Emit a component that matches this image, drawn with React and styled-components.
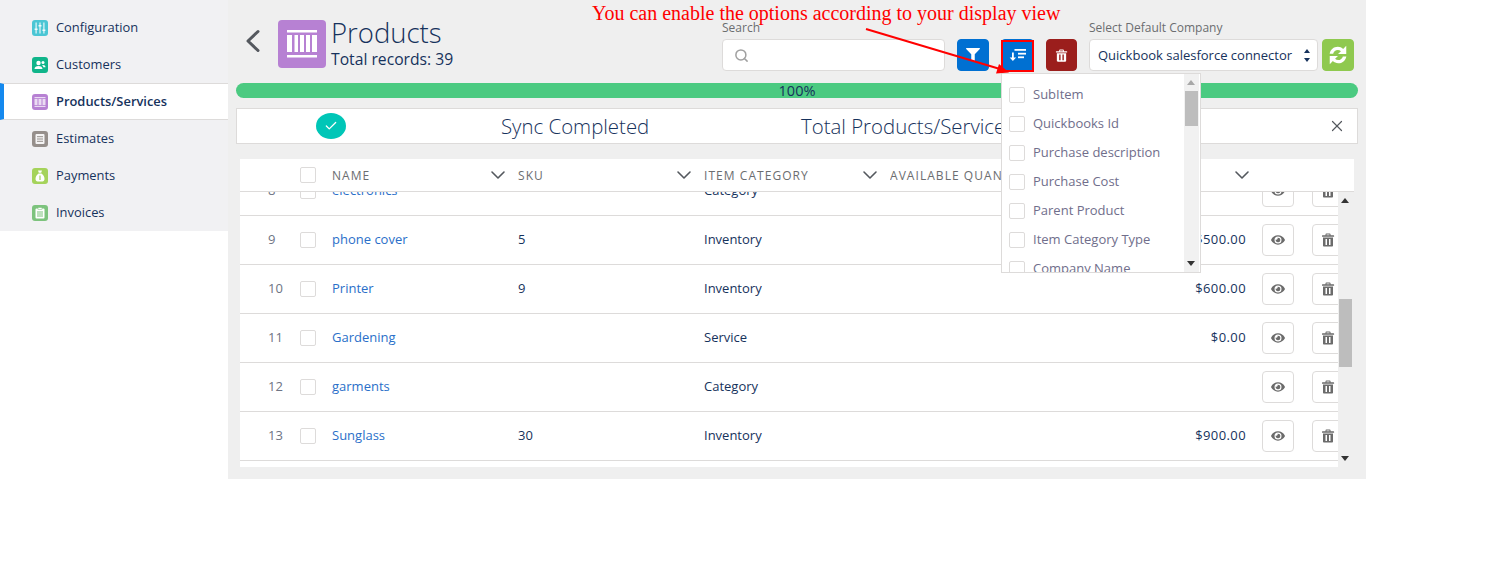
import React from "react";
import styled, { createGlobalStyle } from "styled-components";
import { ChevronDown, Search as SearchGlyph, X, Check } from "lucide-react";
import { FaEye, FaFilter } from "react-icons/fa";

const Global = createGlobalStyle`
  html, body { margin: 0; padding: 0; background: #fff; }
  body { font-family: "Open Sans", "Noto Sans", sans-serif; color: #16325c; font-size: 13px; }
  * { box-sizing: border-box; }
`;

const Page = styled.div`
  position: relative;
  width: 1497px;
  height: 583px;
  overflow: hidden;
  display: flex;
  align-items: flex-start;
`;
const Sidebar = styled.nav`
  width: 228px;
  height: 231px;
  padding-top: 9px;
  background: #f1f1f3;
  display: flex;
  flex-direction: column;
`;
const NavItem = styled.div`
  height: 37px;
  display: flex;
  align-items: center;
  gap: 8px;
  padding-left: ${p => (p.$active ? "28px" : "32px")};
  background: ${p => (p.$active ? "#fff" : "transparent")};
  border-left: ${p => (p.$active ? "4px solid #1589ee" : "0")};
  border-top: ${p => (p.$active ? "1px solid #dddbda" : "0")};
  border-bottom: ${p => (p.$active ? "1px solid #dddbda" : "0")};
  font-weight: ${p => (p.$active ? 600 : 400)};
  font-size: 12.9px;
  color: #16325c;
`;
const NavLabel = styled.span`
  padding-bottom: 2px;
`;
const NavIcon = styled.span`
  width: 16px;
  height: 16px;
  border-radius: 3px;
  background: ${p => p.$color};
  display: flex;
  align-items: center;
  justify-content: center;
  flex: none;
  svg { display: block; }
`;
const Main = styled.main`
  width: 1138px;
  height: 479px;
  background: #efefef;
  padding: 0 8px;
  display: flex;
  flex-direction: column;
`;
const Header = styled.header`
  height: 83px;
  display: flex;
  align-items: flex-start;
`;
const BackButton = styled.span`
  margin: 29px 0 0 9px;
  width: 25px;
  svg { display: block; }
`;
const ProductsBadge = styled.span`
  margin: 20px 5px 0 8px;
  width: 48px;
  height: 48px;
  border-radius: 4px;
  background: #b781d3;
  display: flex;
  align-items: center;
  justify-content: center;
`;
const TitleBlock = styled.div`
  padding-top: 15px;
  width: 391px;
`;
const Title = styled.h1`
  margin: 0;
  font-weight: 300;
  font-size: 27.5px;
  line-height: 35px;
  color: #16325c;
`;
const Count = styled.div`
  font-size: 15.7px;
  line-height: 18px;
  color: #16325c;
`;
const Field = styled.div`
  display: flex;
  flex-direction: column;
  width: ${p => p.$w}px;
  padding-top: 21px;
`;
const FieldLabel = styled.label`
  height: 18px;
  font-size: 12px;
  line-height: 14px;
  color: #6b6d70;
`;
const InputBox = styled.div`
  height: 32px;
  background: #fff;
  border: 1px solid #dddbda;
  border-radius: 4px;
  display: flex;
  align-items: center;
  padding-left: 11px;
  color: #a0a0a0;
  font-size: 13px;
`;
const SelectBox = styled(InputBox)`
  padding: 0 8px;
  justify-content: space-between;
  color: #16325c;
  white-space: nowrap;
`;
const Stepper = styled.span`
  display: flex;
  flex-direction: column;
  gap: 5px;
  margin-right: -1px;
`;
const StepArrow = styled.i`
  display: block;
  width: 0;
  height: 0;
  border-left: 3px solid transparent;
  border-right: 3px solid transparent;
  ${p => (p.$up ? "border-bottom: 4px solid #16325c;" : "border-top: 4px solid #16325c;")}
`;
const Actions = styled.div`
  display: flex;
  gap: 12px;
  margin: 39px 12px 0 12px;
`;
const IconButton = styled.button`
  width: ${p => p.$w || 32}px;
  height: 32px;
  padding: 0;
  border: 1px solid ${p => p.$bg};
  border-radius: 4px;
  background: ${p => p.$bg};
  display: flex;
  align-items: center;
  justify-content: center;
  color: #fff;
  svg { display: block; }
`;
const SyncButton = styled(IconButton)`
  margin: 39px 4px 0 4px;
`;
const Progress = styled.div`
  height: 15px;
  border-radius: 8px;
  background: #4bca81;
  text-align: center;
  font-size: 14.5px;
  line-height: 15px;
  color: #16325c;
`;
const SyncPanel = styled.section`
  height: 36px;
  margin-top: 10px;
  background: #fff;
  border: 1px solid #dddbda;
  display: flex;
  align-items: center;
  font-weight: 300;
  font-size: 20.4px;
  color: #16325c;
`;
const SyncBadge = styled.span`
  width: 30px;
  height: 26px;
  margin-left: 79px;
  border-radius: 50%;
  background: #00c6b7;
  color: #fff;
  display: flex;
  align-items: center;
  justify-content: center;
`;
const SyncStatus = styled.span`
  margin-left: 155px;
  width: 300px;
`;
const SyncTotal = styled.span`
  white-space: nowrap;
`;
const CloseIcon = styled.span`
  margin-left: auto;
  margin-right: 11px;
  color: #54585e;
  svg { display: block; }
`;
const TableCard = styled.section`
  margin: 15px 4px 0 4px;
  height: 308px;
  display: flex;
  flex-direction: column;
  overflow: hidden;
`;
const HeadRow = styled.div`
  flex: none;
  height: 33px;
  background: #fff;
  border-bottom: 1px solid #dddbda;
  display: grid;
  grid-template-columns: 60px 32px 186px 186px 186px 186px 186px;
  align-items: center;
`;
const HeadCell = styled.div`
  display: flex;
  align-items: center;
  padding-right: 8px;
  font-size: 12px;
  letter-spacing: 1.05px;
  color: #6b6d70;
  white-space: nowrap;
  overflow: hidden;
  svg { flex: none; margin-left: auto; color: #54585e; }
`;
const BodyWrap = styled.div`
  flex: 1;
  display: flex;
  min-height: 0;
  overflow: hidden;
`;
const Rows = styled.div`
  width: 1098px;
  background: #fff;
  overflow: hidden;
`;
const RowsInner = styled.div`
  margin-top: -25px;
`;
const Row = styled.div`
  height: 49px;
  border-bottom: 1px solid #dddbda;
  display: grid;
  grid-template-columns: 60px 32px 186px 186px 186px 356px 16px 32px 18px 32px;
  align-items: center;
  width: 1110px;
`;
const RowNum = styled.div`
  padding: 0 0 2px 28px;
  color: #6e7484;
`;
const CheckBox = styled.span`
  display: block;
  width: 16px;
  height: 16px;
  background: #fff;
  border: 1px solid #dddbda;
  border-radius: 2px;
  flex: none;
`;
const NameLink = styled.a`
  color: #2a6fc9;
  padding-bottom: 2px;
`;
const Cell = styled.div`
  color: #16325c;
  padding-bottom: 2px;
`;
const Price = styled(Cell)`
  text-align: right;
  letter-spacing: 0.4px;
`;
const RowButton = styled.span`
  width: 32px;
  height: 32px;
  border: 1px solid #dddbda;
  border-radius: 4px;
  background: #fff;
  color: #6b6b6b;
  display: flex;
  align-items: center;
  justify-content: center;
  grid-column: ${p => p.$col};
`;
const Track = styled.div`
  width: 16px;
  position: relative;
  background: #efefef;
`;
const TrackArrow = styled.span`
  position: absolute;
  left: 3px;
  ${p => (p.$up ? "top: 6px;" : "bottom: 6px;")}
  width: 0;
  height: 0;
  border-left: 4px solid transparent;
  border-right: 4px solid transparent;
  ${p => (p.$up ? `border-bottom: 5px solid ${p.$c || "#333"};` : `border-top: 5px solid ${p.$c || "#333"};`)}
`;
const TrackThumb = styled.span`
  position: absolute;
  left: 1px;
  width: 13px;
  top: ${p => p.$top}px;
  height: ${p => p.$h}px;
  background: #bdbdbd;
`;
const Menu = styled.div`
  position: absolute;
  left: 1001px;
  top: 73px;
  width: 200px;
  height: 200px;
  background: #fff;
  border: 1px solid #dddbda;
  display: flex;
  overflow: hidden;
`;
const MenuList = styled.div`
  flex: 1;
  padding: 6px 0 0 7px;
`;
const MenuItem = styled.div`
  height: 29px;
  display: flex;
  align-items: center;
  gap: 8px;
  color: #706e8b;
  white-space: nowrap;
`;
const MenuLabel = styled.span`
  padding-bottom: 2px;
`;
const MenuTrack = styled(Track)`
  width: 15px;
  margin-right: 1px;
  background: #f1f1f1;
`;
const SortHighlight = styled.span`
  position: absolute;
  left: 1001px;
  top: 40px;
  width: 33px;
  height: 32px;
  border: 2px solid #f00;
`;
const Note = styled.div`
  position: absolute;
  left: 592px;
  top: 2px;
  font-family: "Liberation Serif", serif;
  font-size: 20px;
  line-height: 23px;
  color: #f00;
  white-space: nowrap;
`;
const ArrowLayer = styled.svg`
  position: absolute;
  left: 860px;
  top: 25px;
`;

const TrashGlyph = ({ size = 14, color = "currentColor" }) => (
  <svg width={size} height={size} viewBox="0 0 14 14" fill={color}>
    <path d="M5.3 0.6h3.4c.5 0 .9.4.9.9v.8h3c.3 0 .5.2.5.5v.9H1v-.9c0-.3.2-.5.5-.5h3v-.8c0-.5.4-.9.8-.9zM5.5 1.5v.8h3v-.8z" />
    <path fillRule="evenodd" d="M2 4.6h10v8c0 .6-.5 1-1 1H3c-.5 0-1-.4-1-1zM4.500 6v6h1.500V6zM8 6v6h1.500V6z" />
  </svg>
);
const SortGlyph = () => (
  <svg width="18" height="14" viewBox="0 0 18 14" fill="#fff">
    <rect x="5.500" y="1" width="11.500" height="1.800" />
    <rect x="9" y="4.800" width="8" height="1.800" />
    <rect x="9" y="8.400" width="6" height="1.800" />
    <path d="M3 4.400h1.800v5h2.300L3.900 13 .7 9.400H3z" />
  </svg>
);
const RefreshGlyph = () => (
  <svg width="22" height="22" viewBox="0 0 24 24" fill="#fff">
    <path d="M21 2v9h-9l3.200-3.200c-1-.9-2.100-1.300-3.400-1.300-2.400 0-4.500 1.700-5.100 4H2.900C3.700 6 7.300 3 11.800 3c2.200 0 4.300.9 5.800 2.400z" />
    <path d="M3 22v-9h9l-3.200 3.200c1 .9 2.100 1.300 3.400 1.300 2.400 0 4.500-1.700 5.100-4h3.800C20.300 18 16.700 21 12.200 21c-2.200 0-4.300-.9-5.800-2.400z" />
  </svg>
);
const BackGlyph = () => (
  <svg width="16" height="24" viewBox="0 0 16 24" fill="none" stroke="#54585e" strokeWidth="3" strokeLinecap="round" strokeLinejoin="round">
    <polyline points="13,2.500 3,12 13,21.500" />
  </svg>
);
const ColumnsGlyph = () => (
  <svg width="30" height="28" viewBox="0 0 30 28" fill="#fff">
    <rect x="0" y="0" width="30" height="2.500" />
    <rect x="0" y="25" width="30" height="2.500" />
    <rect x="0" y="5" width="5" height="17" />
    <rect x="7.500" y="5" width="3.500" height="17" />
    <rect x="13" y="5" width="4" height="17" />
    <rect x="19" y="5" width="4" height="17" />
    <rect x="25" y="5" width="5" height="17" />
  </svg>
);
const SmallColumnsGlyph = () => (
  <svg width="12" height="12" viewBox="0 0 12 12" fill="#fff" fillOpacity="0.72">
    <rect x="0.500" y="1" width="11" height="1.200" />
    <rect x="0.500" y="9.800" width="11" height="1.200" />
    <rect x="0.500" y="3" width="3" height="6" />
    <rect x="4.500" y="3" width="3" height="6" />
    <rect x="8.500" y="3" width="3" height="6" />
  </svg>
);
const SlidersGlyph = () => (
  <svg width="12" height="12" viewBox="0 0 12 12" fill="#fff" fillOpacity="0.85">
    <rect x="1.500" y="0.500" width="1.200" height="11" />
    <rect x="5.400" y="0.500" width="1.200" height="11" />
    <rect x="9.300" y="0.500" width="1.200" height="11" />
    <rect x="0.600" y="6.500" width="3" height="1.500" />
    <rect x="4.500" y="3" width="3" height="1.500" />
    <rect x="8.400" y="7.500" width="3" height="1.500" />
  </svg>
);
const UsersGlyph = () => (
  <svg width="12" height="12" viewBox="0 0 12 12" fill="#fff">
    <circle cx="4.500" cy="4" r="2.200" />
    <path d="M0.500 10c0-2 1.800-3 4-3s4 1 4 3z" />
    <circle cx="9" cy="3.500" r="1.500" />
    <path d="M9 6c1.500 0 2.500.7 2.500 2.200H9.400C9.200 7.300 8.700 6.700 8 6.300z" />
  </svg>
);
const DocGlyph = () => (
  <svg width="12" height="12" viewBox="0 0 12 12">
    <rect x="1.500" y="1" width="9" height="10" rx="1" fill="#fff" fillOpacity="0.9" />
    <rect x="3" y="3.200" width="6" height="1" fill="#968f8b" />
    <rect x="3" y="5.500" width="6" height="1" fill="#968f8b" />
    <rect x="3" y="7.800" width="6" height="1" fill="#968f8b" />
  </svg>
);
const BagGlyph = () => (
  <svg width="12" height="12" viewBox="0 0 12 12">
    <path fill="#fff" d="M4 0.500h4L7.200 2.800H4.800z" />
    <path fill="#fff" d="M4.500 3.500h3C9.500 5 10.500 7 10.500 9c0 1.500-1 2.500-2 2.500h-5c-1 0-2-1-2-2.500 0-2 1-4 3-5.500z" />
    <rect x="5.400" y="5.500" width="1.200" height="4.500" fill="#a5d35a" />
  </svg>
);
const ClipboardGlyph = () => (
  <svg width="12" height="12" viewBox="0 0 12 12">
    <rect x="1.500" y="1.500" width="9" height="10" rx="1" fill="#fff" />
    <rect x="4" y="0.500" width="4" height="2" fill="#fff" stroke="#7dc37d" strokeWidth="0.500" />
    <rect x="3" y="4.500" width="6" height="1" fill="#7dc37d" />
    <rect x="3" y="6.500" width="6" height="1" fill="#7dc37d" />
    <rect x="3" y="8.500" width="6" height="1" fill="#7dc37d" />
  </svg>
);

const navItems = [
  { label: "Configuration", color: "#4bc6d4", icon: <SlidersGlyph /> },
  { label: "Customers", color: "#10b58a", icon: <UsersGlyph /> },
  { label: "Products/Services", color: "#b781d3", icon: <SmallColumnsGlyph />, active: true },
  { label: "Estimates", color: "#968f8b", icon: <DocGlyph /> },
  { label: "Payments", color: "#a5d35a", icon: <BagGlyph /> },
  { label: "Invoices", color: "#7dc37d", icon: <ClipboardGlyph /> },
];
const headers = ["NAME", "SKU", "ITEM CATEGORY", "AVAILABLE QUANTITY", ""];
const rows = [
  { n: 8, name: "electronics", sku: "", cat: "Category", price: "" },
  { n: 9, name: "phone cover", sku: "5", cat: "Inventory", price: "$500.00" },
  { n: 10, name: "Printer", sku: "9", cat: "Inventory", price: "$600.00" },
  { n: 11, name: "Gardening", sku: "", cat: "Service", price: "$0.00" },
  { n: 12, name: "garments", sku: "", cat: "Category", price: "" },
  { n: 13, name: "Sunglass", sku: "30", cat: "Inventory", price: "$900.00" },
  { n: 14, blank: true },
];
const menuItems = ["SubItem", "Quickbooks Id", "Purchase description", "Purchase Cost", "Parent Product", "Item Category Type", "Company Name"];

export default function App() {
  return (
    <Page>
      <Global />
      <Sidebar>
        {navItems.map(n => (
          <NavItem key={n.label} $active={n.active}>
            <NavIcon $color={n.color}>{n.icon}</NavIcon>
            <NavLabel>{n.label}</NavLabel>
          </NavItem>
        ))}
      </Sidebar>
      <Main>
        <Header>
          <BackButton><BackGlyph /></BackButton>
          <ProductsBadge><ColumnsGlyph /></ProductsBadge>
          <TitleBlock>
            <Title>Products</Title>
            <Count>Total records: 39</Count>
          </TitleBlock>
          <Field $w={223}>
            <FieldLabel>Search</FieldLabel>
            <InputBox><SearchGlyph size={15} strokeWidth={2.4} /></InputBox>
          </Field>
          <Actions>
            <IconButton $bg="#0070d2"><FaFilter size={14} /></IconButton>
            <IconButton $bg="#0070d2" $w={33}><SortGlyph /></IconButton>
            <IconButton $bg="#9b1e1c" $w={31}><TrashGlyph size={13} /></IconButton>
          </Actions>
          <Field $w={229}>
            <FieldLabel>Select Default Company</FieldLabel>
            <SelectBox>
              Quickbook salesforce connector
              <Stepper>
                <StepArrow $up />
                <StepArrow />
              </Stepper>
            </SelectBox>
          </Field>
          <SyncButton $bg="#8fc94f"><RefreshGlyph /></SyncButton>
        </Header>
        <Progress>100%</Progress>
        <SyncPanel>
          <SyncBadge><Check size={14} strokeWidth={2.2} /></SyncBadge>
          <SyncStatus>Sync Completed</SyncStatus>
          <SyncTotal>Total Products/Services</SyncTotal>
          <CloseIcon><X size={18} strokeWidth={1.6} /></CloseIcon>
        </SyncPanel>
        <TableCard>
          <HeadRow>
            <span />
            <CheckBox />
            {headers.map((h, i) => (
              <HeadCell key={i}>
                {h}
                {i !== 3 && <ChevronDown size={24} strokeWidth={1.6} />}
              </HeadCell>
            ))}
          </HeadRow>
          <BodyWrap>
            <Rows>
              <RowsInner>
                {rows.map(r => (
                  <Row key={r.n}>
                    {!r.blank && (
                      <>
                        <RowNum>{r.n}</RowNum>
                        <CheckBox />
                        <NameLink>{r.name}</NameLink>
                        <Cell>{r.sku}</Cell>
                        <Cell>{r.cat}</Cell>
                        <Price>{r.price}</Price>
                        <RowButton $col={8}><FaEye size={14} /></RowButton>
                        <RowButton $col={10}><TrashGlyph /></RowButton>
                      </>
                    )}
                  </Row>
                ))}
              </RowsInner>
            </Rows>
            <Track>
              <TrackArrow $up />
              <TrackThumb $top={107} $h={68} />
              <TrackArrow />
            </Track>
          </BodyWrap>
        </TableCard>
      </Main>
      <Menu>
        <MenuList>
          {menuItems.map(m => (
            <MenuItem key={m}><CheckBox /><MenuLabel>{m}</MenuLabel></MenuItem>
          ))}
        </MenuList>
        <MenuTrack>
          <TrackArrow $up $c="#a8a8a8" />
          <TrackThumb $top={17} $h={35} />
          <TrackArrow />
        </MenuTrack>
      </Menu>
      <SortHighlight />
      <Note>You can enable the options according to your display view</Note>
      <ArrowLayer width="160" height="60" viewBox="860 25 160 60">
        <line x1="866" y1="29" x2="1000" y2="69" stroke="#f00" strokeWidth="2" />
        <polygon points="1009,72.500 996,73.500 999,64" fill="#f00" />
      </ArrowLayer>
    </Page>
  );
}
